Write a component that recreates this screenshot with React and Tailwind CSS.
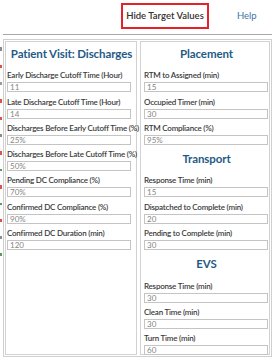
import React from 'react'

const placement = [
  { label: 'RTM to Assigned (min)', value: '15' },
  { label: 'Occupied Timer (min)', value: '30' },
  { label: 'RTM Compliance (%)', value: '95%' },
]

const transport = [
  { label: 'Response Time (min)', value: '15' },
  { label: 'Dispatched to Complete (min)', value: '20' },
  { label: 'Pending to Complete (min)', value: '30' },
]

const evs = [
  { label: 'Response Time (min)', value: '30' },
  { label: 'Clean Time (min)', value: '30' },
  { label: 'Turn Time (min)', value: '60' },
]

const discharges = [
  { label: 'Early Discharge Cutoff Time (Hour)', value: '11' },
  { label: 'Late Discharge Cutoff Time (Hour)', value: '14' },
  { label: 'Discharges Before Early Cutoff Time (%)', value: '25%' },
  { label: 'Discharges Before Late Cutoff Time (%)', value: '50%' },
  { label: 'Pending DC Compliance (%)', value: '70%' },
  { label: 'Confirmed DC Compliance (%)', value: '90%' },
  { label: 'Confirmed DC Duration (min)', value: '120' },
]

const Title = ({ children }) => (
  <div className="my-[4px] text-center text-[11.5px] leading-[16px] font-bold text-[#1f5b86] tracking-[-0.1px]">
    {children}
  </div>
)

const Field = ({ label, value }) => (
  <div className="flex flex-col">
    <div className="text-[8px] leading-[14px] font-semibold text-[#3a3a3a] tracking-[-0.22px] whitespace-nowrap">{label}</div>
    <div className="w-[124px] h-[10px] border border-[#c4c4c4] bg-white pl-[2px] text-[8px] leading-[8px] text-[#858585]">
      {value}
    </div>
  </div>
)

export default function App() {
  return (
    <div className="w-[275px] h-[358px] bg-white overflow-hidden font-['Lato',sans-serif]">
      {/* Top bar */}
      <div className="h-[34px] flex items-start pt-[3px]">
        <div className="w-[121px]" />
        <div className="w-[88px] h-[26px] border-2 border-[#e2232b] flex items-center justify-center text-[9.5px] font-semibold text-[#333]">
          Hide Target Values
        </div>
        <div className="ml-[28px] h-[26px] flex items-center text-[9.5px] text-[#3a74a6]">Help</div>
      </div>
      <div className="h-[1px] mx-[3px] bg-[#a8a8a8]" />

      <div className="flex mt-[4px]">
        {/* bits of the page behind */}
        <div className="w-[3px] flex flex-col pt-[8px] gap-[14px]">
          <div className="h-[4px] w-[2px] bg-[#8a8a8a]" />
          <div className="h-[3px] w-[2px] bg-[#e0504a]" />
          <div className="h-[3px] w-[2px] bg-[#9a9a9a]" />
          <div className="h-[4px] w-[2px] bg-[#e0504a]" />
          <div className="h-[3px] w-[2px] bg-[#e0504a]" />
          <div className="h-[3px] w-[2px] bg-[#8a8a8a]" />
          <div className="h-[4px] w-[2px] bg-[#e0504a]" />
          <div className="h-[2px] w-[2px] bg-[#5a9a5a]" />
          <div className="h-[4px] w-[2px] bg-[#e0504a]" />
          <div className="h-[2px] w-[2px] bg-[#5a9a5a]" />
          <div className="h-[3px] w-[2px] bg-[#e0504a]" />
          <div className="h-[3px] w-[2px] bg-[#8a8a8a]" />
          <div className="h-[3px] w-[2px] bg-[#5a9a5a]" />
        </div>

        <div className="w-[269px] h-[318px] border border-[#cfcfcf] p-[1px] flex gap-[3px]">
          {/* Left panel */}
          <div className="w-[132px] border border-[#d2d2d2] pl-[1px] flex flex-col gap-[2.3px]">
            <Title>Patient Visit: Discharges</Title>
            {discharges.map((f) => (
              <Field key={f.label} {...f} />
            ))}
          </div>

          {/* Right panel */}
          <div className="flex-1 border border-[#d2d2d2] pl-[3px] flex flex-col gap-[2.3px]">
            <Title>Placement</Title>
            {placement.map((f) => (
              <Field key={f.label} {...f} />
            ))}
            <Title>Transport</Title>
            {transport.map((f) => (
              <Field key={f.label + 't'} {...f} />
            ))}
            <Title>EVS</Title>
            {evs.map((f) => (
              <Field key={f.label + 'e'} {...f} />
            ))}
          </div>
        </div>
      </div>
    </div>
  )
}
